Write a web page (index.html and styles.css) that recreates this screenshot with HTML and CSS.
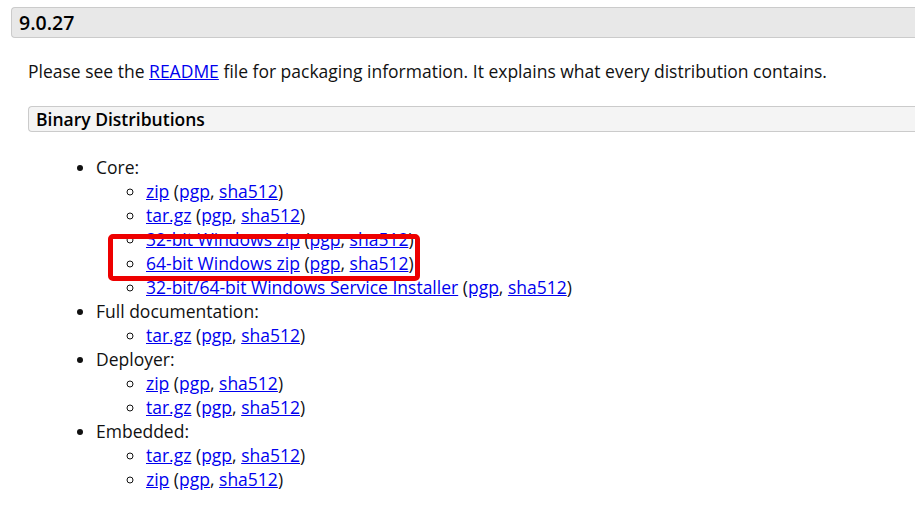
FILE: index.html
```html
<!DOCTYPE html>
<html>
<head>
<meta charset="utf-8">
<link rel="stylesheet" href="styles.css">
</head>
<body>
<div class="page">
  <h3 class="version">9.0.27</h3>
  <div class="content">
    <p class="intro">Please see the <a href="#">README</a> file for packaging information. It explains what every distribution contains.</p>
    <h4 class="section">Binary Distributions</h4>
    <ul class="dist">
      <li>Core:
        <ul class="files">
          <li><a href="#">zip</a> (<a href="#">pgp</a>, <a href="#">sha512</a>)</li>
          <li><a href="#">tar.gz</a> (<a href="#">pgp</a>, <a href="#">sha512</a>)</li>
          <li><a href="#">32-bit Windows zip</a> (<a href="#">pgp</a>, <a href="#">sha512</a>)</li>
          <li class="marked"><a href="#">64-bit Windows zip</a> (<a href="#">pgp</a>, <a href="#">sha512</a>)<span class="highlight"></span></li>
          <li><a href="#">32-bit/64-bit Windows Service Installer</a> (<a href="#">pgp</a>, <a href="#">sha512</a>)</li>
        </ul>
      </li>
      <li>Full documentation:
        <ul class="files">
          <li><a href="#">tar.gz</a> (<a href="#">pgp</a>, <a href="#">sha512</a>)</li>
        </ul>
      </li>
      <li>Deployer:
        <ul class="files">
          <li><a href="#">zip</a> (<a href="#">pgp</a>, <a href="#">sha512</a>)</li>
          <li><a href="#">tar.gz</a> (<a href="#">pgp</a>, <a href="#">sha512</a>)</li>
        </ul>
      </li>
      <li>Embedded:
        <ul class="files">
          <li><a href="#">tar.gz</a> (<a href="#">pgp</a>, <a href="#">sha512</a>)</li>
          <li><a href="#">zip</a> (<a href="#">pgp</a>, <a href="#">sha512</a>)</li>
        </ul>
      </li>
    </ul>
  </div>
</div>
</body>
</html>
```
FILE: styles.css
```css
html, body {
  margin: 0;
  padding: 0;
  background: #fff;
}
body {
  font-family: "Open Sans", "Noto Sans", sans-serif;
  font-size: 17.5px;
  color: #111;
  overflow: hidden;
}
.page {
  padding: 7px 0 0 11px;
}
.version {
  margin: 0 -20px 0 0;
  height: 29px;
  line-height: 29px;
  padding-left: 7px;
  font-size: 19.5px;
  font-weight: 600;
  color: #000;
  background: #e8e8e8;
  border: 1px solid #cbcbcb;
  border-right: none;
  border-radius: 4px 0 0 4px;
}
.content {
  padding-left: 17px;
}
.intro {
  margin: 21px 0 0 0;
  line-height: 24px;
}
a {
  color: #0000ee;
  text-decoration: underline;
}
.section {
  margin: 23px -20px 0 0;
  height: 24px;
  line-height: 24px;
  padding-left: 7px;
  font-size: 17.5px;
  font-weight: 600;
  color: #000;
  background: #f4f4f4;
  border: 1px solid #cbcbcb;
  border-right: none;
  border-radius: 4px 0 0 4px;
}
.dist {
  margin: 23px 0 0 0;
  padding-left: 68px;
  line-height: 24px;
  list-style: disc;
}
.files {
  margin: 0;
  padding-left: 50px;
  list-style: circle;
}
.marked {
  position: relative;
}
.highlight {
  position: absolute;
  left: -38px;
  top: -17px;
  width: 302px;
  height: 37px;
  border: 5px solid #ee0000;
  border-radius: 5px;
}
```
